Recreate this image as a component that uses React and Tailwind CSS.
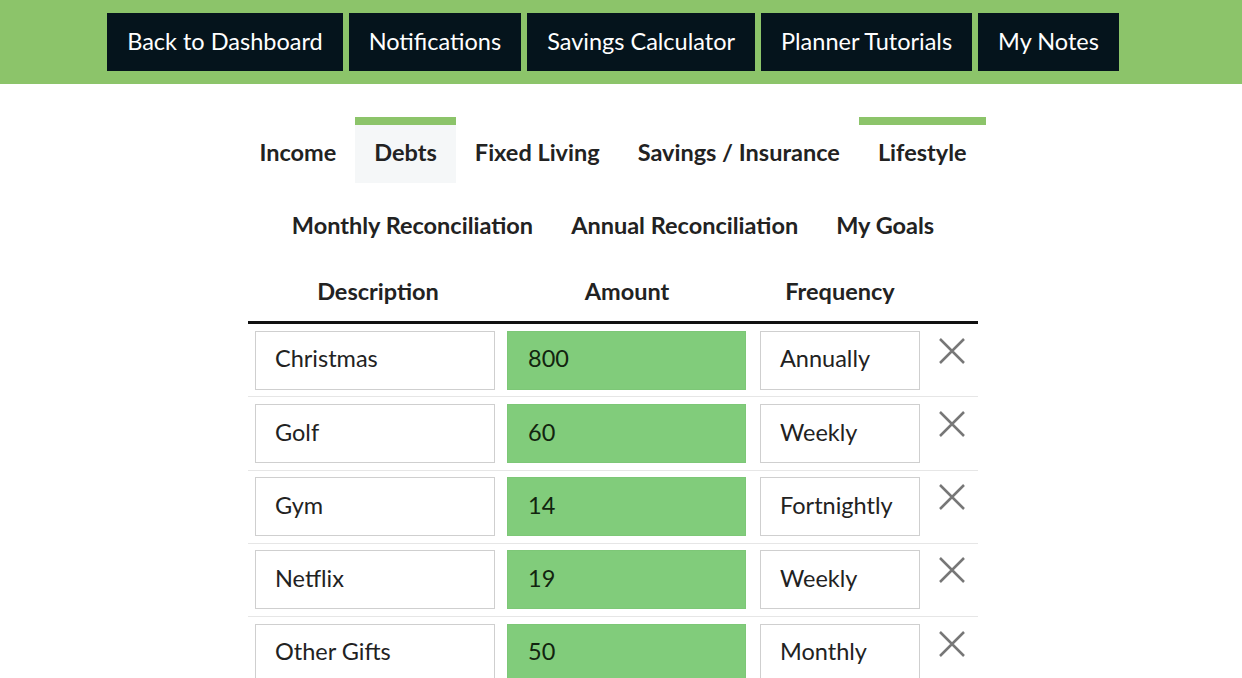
const navButtons = ['Back to Dashboard', 'Notifications', 'Savings Calculator', 'Planner Tutorials', 'My Notes']

const tabsTop = [
  { label: 'Income' },
  { label: 'Debts', active: true, shaded: true },
  { label: 'Fixed Living' },
  { label: 'Savings / Insurance' },
  { label: 'Lifestyle', active: true },
]

const tabsBottom = [{ label: 'Monthly Reconciliation' }, { label: 'Annual Reconciliation' }, { label: 'My Goals' }]

const rows = [
  { desc: 'Christmas', amount: '800', freq: 'Annually' },
  { desc: 'Golf', amount: '60', freq: 'Weekly' },
  { desc: 'Gym', amount: '14', freq: 'Fortnightly' },
  { desc: 'Netflix', amount: '19', freq: 'Weekly' },
  { desc: 'Other Gifts', amount: '50', freq: 'Monthly' },
]

function Tab({ label, active, shaded }) {
  return (
    <div className={`flex flex-col shrink-0 ${shaded ? 'bg-[#f5f7f8]' : ''}`}>
      <div className={`h-[8px] ${active ? 'bg-[#8cc46a]' : ''}`} />
      <div className="h-[58px] px-[19px] pb-[2px] flex items-center whitespace-nowrap text-[23.5px] font-bold text-[#222]">{label}</div>
    </div>
  )
}

function CloseIcon() {
  return (
    <svg width="28" height="28" viewBox="0 0 28 28" className="text-[#777]">
      <path d="M2 2 L26 26 M26 2 L2 26" stroke="currentColor" strokeWidth="2.5" fill="none" />
    </svg>
  )
}

export default function App() {
  return (
    <div className="min-h-screen bg-white pr-[16px]" style={{ fontFamily: 'Lato, "Open Sans", sans-serif' }}>
      {/* Top nav */}
      <div className="bg-[#8cc46a] h-[84px] mr-[-16px] pr-[16px] flex items-center justify-center gap-[6px]">
        {navButtons.map((b) => (
          <div key={b} className="bg-[#05141c] text-white h-[58px] px-[20px] pb-[1px] flex items-center whitespace-nowrap text-[23.5px] leading-none">
            {b}
          </div>
        ))}
      </div>

      <div className="w-[730px] mx-auto">
        {/* Tabs */}
        <div className="flex justify-center mt-[33px]">
          {tabsTop.map((t) => (
            <Tab key={t.label} {...t} />
          ))}
        </div>
        <div className="flex justify-center mt-[7px]">
          {tabsBottom.map((t) => (
            <Tab key={t.label} {...t} />
          ))}
        </div>

        {/* Table */}
        <div className="mt-[6px]">
          <div className="flex h-[62px] items-center border-b-[3px] border-[#111] text-[23.5px] font-bold text-[#222]">
            <div className="w-[253px] text-center pl-[7px]">Description</div>
            <div className="w-[252px] text-center">Amount</div>
            <div className="w-[174px] text-center">Frequency</div>
            <div className="flex-1" />
          </div>
          {rows.map((r) => (
            <div key={r.desc} className="flex items-start pt-[6.5px] pb-[6.75px] border-b border-[#e6e6e6]">
              <div className="w-[253px] pl-[7px] pr-[6px]">
                <div className="h-[59px] border border-[#cfcfcf] flex items-center pl-[19px] pb-[2px] text-[23.5px] text-[#222]">{r.desc}</div>
              </div>
              <div className="w-[252px] pl-[6px] pr-[7px]">
                <div className="h-[59px] bg-[#81cc7b] border border-[#7dc777] flex items-center pl-[20px] pb-[2px] text-[23.5px] text-[#12240f]">{r.amount}</div>
              </div>
              <div className="w-[174px] pl-[7px] pr-[7px]">
                <div className="h-[59px] border border-[#cfcfcf] flex items-center pl-[19px] pb-[2px] text-[23.5px] text-[#222]">{r.freq}</div>
              </div>
              <div className="flex-1 pl-[11px] pt-[6px]">
                <CloseIcon />
              </div>
            </div>
          ))}
        </div>
      </div>
    </div>
  )
}
